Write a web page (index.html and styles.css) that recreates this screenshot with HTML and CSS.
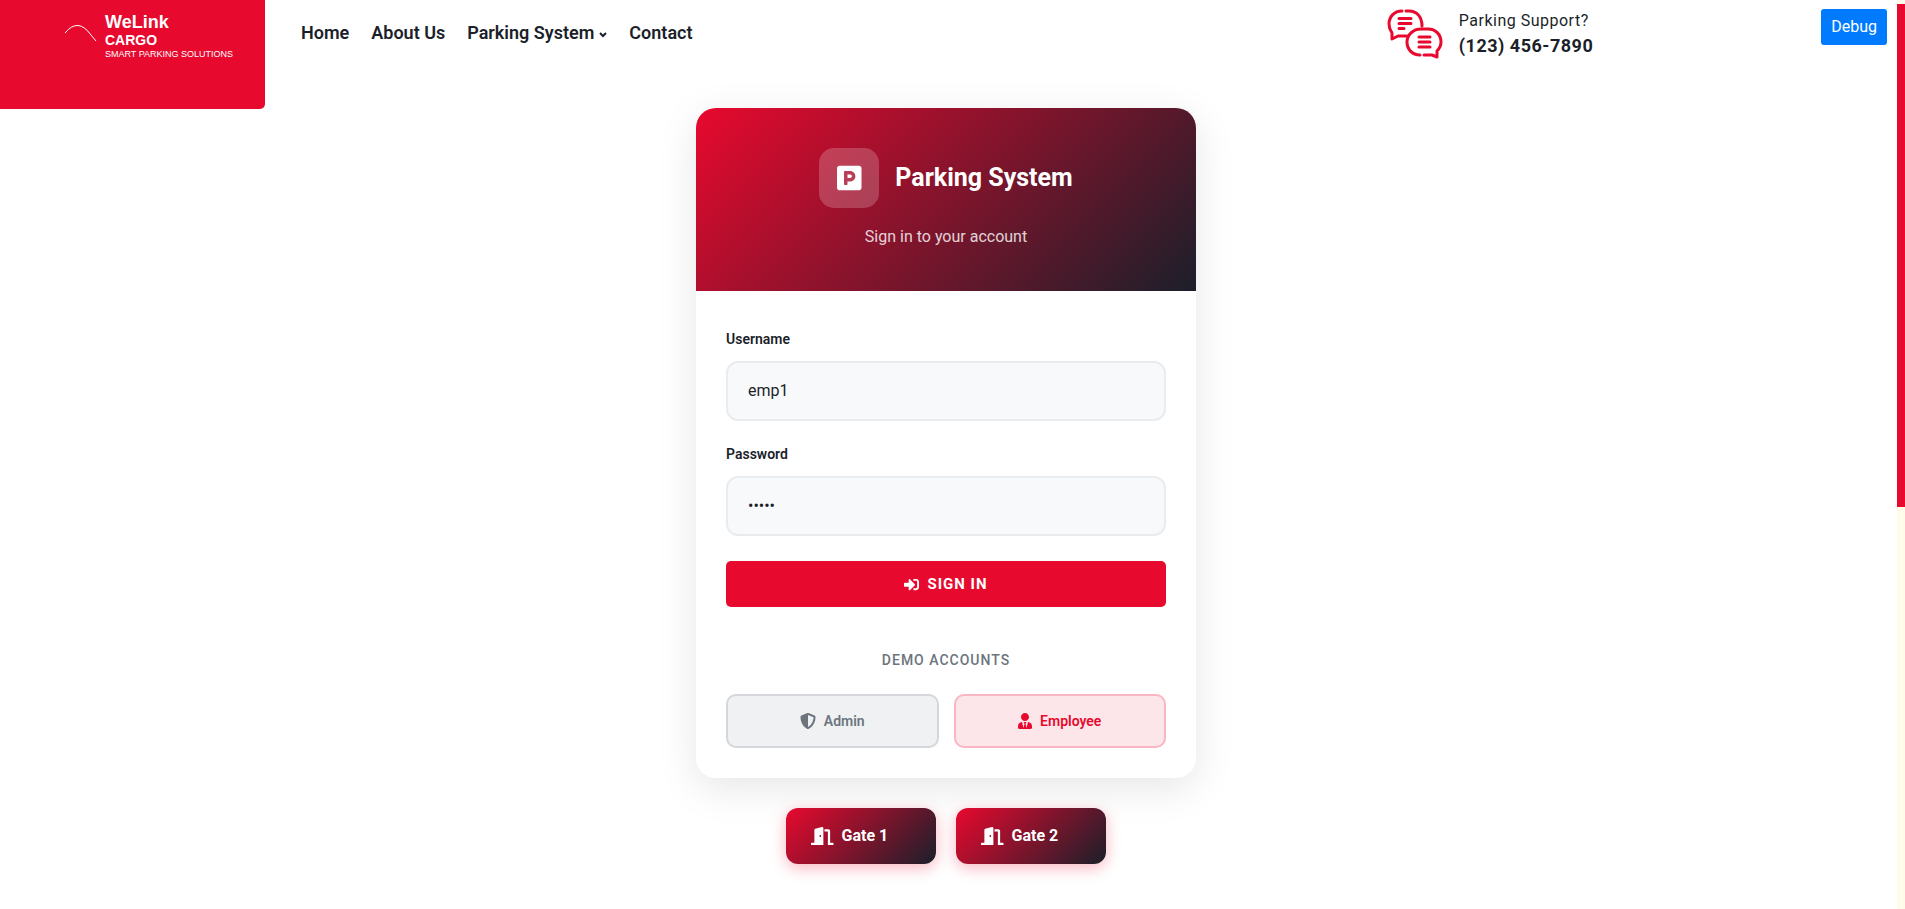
FILE: index.html
```html
<!DOCTYPE html>
<html lang="en">
<head>
<meta charset="utf-8">
<title>Parking System - Sign In</title>
<link rel="stylesheet" href="styles.css">
</head>
<body>
<div class="page">
  <header class="site-header">
    <a class="brand" href="#">
      <svg class="brand-mark" viewBox="0 0 34 18" aria-hidden="true"><path d="M1 9Q14 -7 27 11L32 17" /></svg>
      <span class="brand-text">
        <span class="brand-name">WeLink</span>
        <span class="brand-sub">CARGO</span>
        <span class="brand-tag">SMART PARKING SOLUTIONS</span>
      </span>
    </a>
    <nav class="main-nav" aria-label="Main">
      <a href="#">Home</a>
      <a href="#">About Us</a>
      <a href="#">Parking System <svg class="caret" viewBox="0 0 8 6" aria-hidden="true"><path d="M1 1L4 4L7 1" /></svg></a>
      <a href="#">Contact</a>
    </nav>
    <div class="support">
      <svg class="support-icon" viewBox="0 0 56 50" aria-hidden="true">
        <path d="M15 2C7 2 2 8 2 15C2 19 3 21 5 24V30L11 27H20" />
        <path d="M19 2H22C30 2 35 8 35 17" />
        <path d="M12 9.500H24M12 14.500H24M12 19.500H17" />
        <path d="M33 46C25 46 20 40 20 33C20 26 26 20 34 20H41C49 20 54 26 54 33C54 36 53 39 50 42V48L45 46H37" />
        <path d="M32 28H43M32 33H43M32 38H43" />
      </svg>
      <div class="support-text">
        <span class="support-label">Parking Support?</span>
        <a class="support-phone" href="tel:1234567890">(123) 456-7890</a>
      </div>
    </div>
    <button class="debug" type="button">Debug</button>
  </header>

  <main class="content">
    <section class="card">
      <div class="card-head">
        <div class="title-row">
          <span class="title-icon"><svg viewBox="0 0 448 512" aria-hidden="true"><path d="M400 32H48C21.500 32 0 53.500 0 80v352c0 26.500 21.500 48 48 48h352c26.500 0 48-21.500 48-48V80c0-26.500-21.500-48-48-48zM240 320h-48v48c0 8.800-7.200 16-16 16h-32c-8.800 0-16-7.200-16-16V144c0-8.800 7.200-16 16-16h96c52.900 0 96 43.100 96 96s-43.100 96-96 96zm0-128h-48v64h48c17.600 0 32-14.400 32-32s-14.400-32-32-32z"/></svg></span>
          <h1>Parking System</h1>
        </div>
        <p>Sign in to your account</p>
      </div>
      <form class="card-body">
        <div class="field">
          <label for="username">Username</label>
          <input id="username" type="text" value="emp1">
        </div>
        <div class="field">
          <label for="password">Password</label>
          <input id="password" type="password" value="12345">
        </div>
        <button class="sign-in" type="button">
          <svg viewBox="0 0 512 512" aria-hidden="true"><path d="M416 448h-84c-6.600 0-12-5.400-12-12v-40c0-6.600 5.400-12 12-12h84c17.700 0 32-14.300 32-32V160c0-17.700-14.300-32-32-32h-84c-6.600 0-12-5.400-12-12V76c0-6.600 5.400-12 12-12h84c53 0 96 43 96 96v192c0 53-43 96-96 96zm-47-201L201 79c-15-15-41-4.500-41 17v96H24c-13.300 0-24 10.700-24 24v96c0 13.300 10.700 24 24 24h136v96c0 21.500 26 32 41 17l168-168c9.300-9.400 9.300-24.600 0-34z"/></svg>
          SIGN IN
        </button>
        <h2>DEMO ACCOUNTS</h2>
        <div class="demo-row">
          <button class="demo admin" type="button">
            <svg viewBox="0 0 512 512" aria-hidden="true"><path d="M466.500 83.700l-192-80a48.150 48.150 0 0 0-36.900 0l-192 80C27.700 91.100 16 108.600 16 128c0 198.500 114.500 335.700 221.500 380.300 11.800 4.900 25.100 4.900 36.900 0C360.100 472.600 496 349.300 496 128c0-19.400-11.700-36.900-29.500-44.300zM256.100 446.300l-.1-381 175.900 73.300c-3.300 151.400-82.100 261.100-175.800 307.700z"/></svg>
            Admin
          </button>
          <button class="demo employee" type="button">
            <svg viewBox="0 0 448 512" aria-hidden="true"><path d="M224 256c70.700 0 128-57.300 128-128S294.700 0 224 0 96 57.300 96 128s57.300 128 128 128zm95.800 32.600L272 480l-32-136 32-56h-96l32 56-32 136-47.800-191.400C56.900 292 0 350.300 0 422.400V464c0 26.500 21.500 48 48 48h352c26.500 0 48-21.500 48-48v-41.600c0-72.100-56.900-130.400-128.200-133.800z"/></svg>
            Employee
          </button>
        </div>
      </form>
    </section>
    <div class="gates">
      <a class="gate" href="#"><svg viewBox="0 0 640 512" aria-hidden="true"><path d="M624 448h-80V113.450C544 86.190 522.470 64 496 64H384v64h96v384h144c8.840 0 16-7.160 16-16v-32c0-8.840-7.160-16-16-16zM312.240 1.010l-192 49.740C105.990 54.440 96 67.700 96 82.920V448H16c-8.840 0-16 7.160-16 16v32c0 8.840 7.160 16 16 16h336V33.180c0-21.580-19.560-37.410-39.760-32.170zM264 288c-13.250 0-24-14.330-24-32s10.750-32 24-32 24 14.330 24 32-10.750 32-24 32z"/></svg>Gate 1</a>
      <a class="gate" href="#"><svg viewBox="0 0 640 512" aria-hidden="true"><path d="M624 448h-80V113.450C544 86.190 522.470 64 496 64H384v64h96v384h144c8.840 0 16-7.160 16-16v-32c0-8.840-7.160-16-16-16zM312.240 1.010l-192 49.740C105.990 54.440 96 67.700 96 82.920V448H16c-8.840 0-16 7.160-16 16v32c0 8.840 7.160 16 16 16h336V33.180c0-21.580-19.560-37.410-39.760-32.170zM264 288c-13.250 0-24-14.330-24-32s10.750-32 24-32 24 14.330 24 32-10.750 32-24 32z"/></svg>Gate 2</a>
    </div>
  </main>
</div>
<div class="scroll-track" aria-hidden="true"><div class="scroll-thumb"></div></div>
</body>
</html>
```
FILE: styles.css
```css
:root {
  --red: #e8092e;
  --dark: #1b1f2a;
  --grey: #6c757d;
  --fade: linear-gradient(135deg, var(--red) 0%, var(--dark) 100%);
}

* { box-sizing: border-box; }

body {
  margin: 0;
  min-height: 100vh;
  display: flex;
  background: #fff;
  color: var(--dark);
  font-family: Roboto, "Liberation Sans", sans-serif;
  font-size: 16px;
  line-height: 24px;
}

a { color: inherit; text-decoration: none; }
button, input { font: inherit; color: inherit; }
button { cursor: pointer; }
svg { display: block; fill: currentColor; }

.page { flex: 1; min-width: 0; }

.site-header {
  display: flex;
  align-items: flex-start;
  height: 108px;
  padding-right: 10px;
}

.brand {
  display: flex;
  gap: 7px;
  width: 265px;
  height: 109px;
  padding: 12px 0 0 64px;
  background: var(--red);
  border-radius: 0 0 5px 0;
  color: #fff;
  font-family: "Liberation Sans", Arial, sans-serif;
}
.brand-mark {
  width: 34px;
  height: 18px;
  margin-top: 12px;
  fill: none;
  stroke: #fff;
  stroke-width: 1;
}
.brand-text { display: flex; flex-direction: column; }
.brand-name { font-size: 18px; font-weight: 700; line-height: 20px; }
.brand-sub { font-size: 14px; font-weight: 700; line-height: 16px; }
.brand-tag { font-size: 9px; line-height: 12px; white-space: nowrap; }

.main-nav {
  display: flex;
  gap: 22px;
  padding: 21px 0 0 36px;
  font-size: 18px;
  font-weight: 600;
}
.main-nav a { display: flex; align-items: center; gap: 5px; }
.caret {
  width: 8px;
  height: 6px;
  margin-top: 3px;
  fill: none;
  stroke: currentColor;
  stroke-width: 2;
}

.support {
  display: flex;
  gap: 16px;
  margin-left: auto;
  padding-top: 9px;
}
.support-icon {
  width: 56px;
  height: 50px;
  fill: none;
  stroke: var(--red);
  stroke-width: 3;
  stroke-linecap: round;
  stroke-linejoin: round;
}
.support-text { display: flex; flex-direction: column; gap: 1px; }
.support-label { letter-spacing: 0.5px; }
.support-phone { font-size: 18px; font-weight: 700; letter-spacing: 0.5px; }

.debug {
  margin: 9px 0 0 228px;
  padding: 6px 10px;
  border: 0;
  border-radius: 3px;
  background: #007bff;
  color: #fff;
}

.content {
  display: flex;
  flex-direction: column;
  align-items: center;
  gap: 30px;
  padding: 0 5px 40px 0;
}

.card {
  width: 100%;
  max-width: 500px;
  overflow: hidden;
  border-radius: 20px;
  background: #fff;
  box-shadow: 0 10px 40px rgba(0, 0, 0, 0.1);
}
.card-head {
  padding: 40px 30px 41px;
  background: var(--fade);
  color: #fff;
  text-align: center;
}
.title-row {
  display: flex;
  align-items: center;
  justify-content: center;
  gap: 16px;
  margin-bottom: 15px;
}
.title-icon {
  display: flex;
  align-items: center;
  justify-content: center;
  width: 60px;
  height: 60px;
  border-radius: 15px;
  background: rgba(255, 255, 255, 0.2);
}
.title-icon svg { height: 28px; }
h1 { margin: 0; font-size: 25px; font-weight: 700; line-height: 34px; }
.card-head p { margin: 0; line-height: 27px; opacity: 0.8; }

.card-body { display: flex; flex-direction: column; padding: 35px 30px 30px; }
.field { display: flex; flex-direction: column; gap: 8px; margin-bottom: 20px; }
.field label { font-size: 14px; font-weight: 600; line-height: 27px; }
.field input {
  width: 100%;
  height: 60px;
  padding: 0 20px 2px;
  border: 2px solid #e9ecef;
  border-radius: 12px;
  background: #f8f9fb;
}

.sign-in {
  display: flex;
  align-items: center;
  justify-content: center;
  gap: 8px;
  height: 46px;
  margin-top: 5px;
  border: 0;
  border-radius: 5px;
  background: var(--red);
  color: #fff;
  font-size: 15px;
  font-weight: 700;
  letter-spacing: 1px;
}
.sign-in svg { height: 15px; }

h2 {
  margin: 40px 0 20px;
  color: var(--grey);
  font-size: 14px;
  font-weight: 500;
  line-height: 27px;
  letter-spacing: 1px;
  text-align: center;
}
.demo-row { display: grid; grid-template-columns: 1fr 1fr; gap: 15px; }
.demo {
  display: flex;
  align-items: center;
  justify-content: center;
  gap: 8px;
  height: 54px;
  border: 2px solid;
  border-radius: 10px;
  font-size: 14px;
  font-weight: 600;
}
.demo svg { height: 16px; }
.admin { background: #eff1f3; border-color: #d5d7da; color: var(--grey); }
.employee { background: #fce6ea; border-color: #fab6c2; color: var(--red); }

.gates { display: flex; gap: 20px; }
.gate {
  display: flex;
  align-items: center;
  gap: 8px;
  width: 150px;
  height: 56px;
  padding: 0 25px;
  border-radius: 12px;
  background: var(--fade);
  box-shadow: 0 4px 15px rgba(232, 9, 46, 0.3);
  color: #fff;
  font-weight: 700;
}
.gate svg { height: 18px; }

.scroll-track {
  flex: 0 0 8px;
  padding-top: 4px;
  background: #fffbea;
}
.scroll-thumb { height: 503px; background: var(--red); }
```
